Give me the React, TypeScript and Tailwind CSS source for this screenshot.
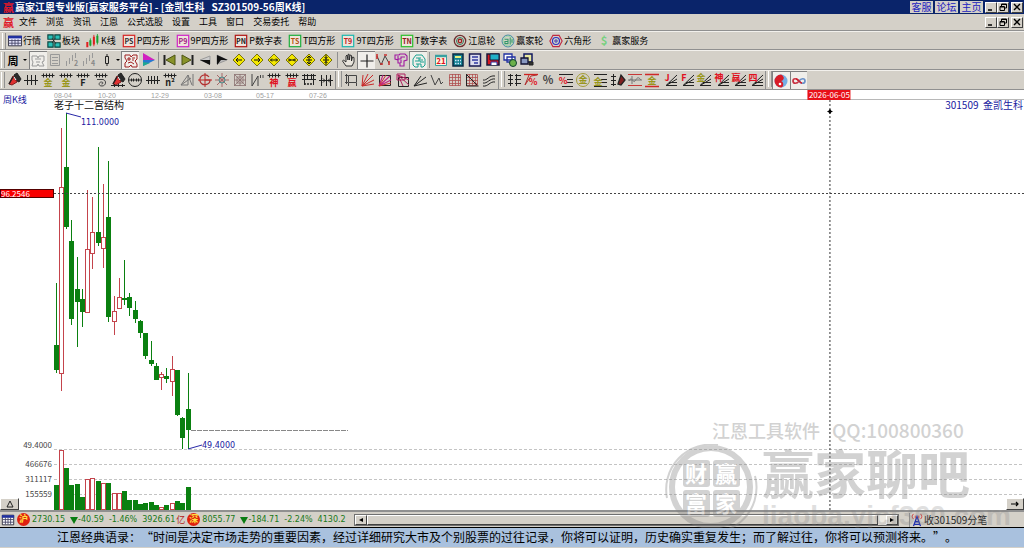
import type { ReactNode } from 'react';
import clsx from 'clsx';

// up candle?, high, low, body top, body bottom, volume top
type Candle = [boolean, number, number, number, number, number];

const candles: Candle[] = [
  [false, 193, 283, 255, 280, 395],
  [true, 38, 301, 97, 284, 360],
  [false, 23, 139, 77, 137, 378],
  [false, 130, 235, 151, 229, 395],
  [false, 167, 257, 199, 212, 394],
  [false, 199, 237, 209, 222, 407],
  [true, 100, 223, 159, 223, 389],
  [true, 107, 179, 142, 164, 388],
  [false, 57, 156, 142, 153, 391],
  [true, 94, 178, 147, 159, 393],
  [false, 71, 232, 127, 227, 393],
  [true, 206, 245, 221, 232, 403],
  [true, 188, 219, 207, 219, 403],
  [false, 170, 215, 208, 210, 401],
  [false, 203, 226, 207, 218, 410],
  [false, 211, 233, 220, 229, 410],
  [false, 230, 248, 231, 243, 414],
  [false, 243, 269, 243, 266, 413],
  [false, 251, 276, 270, 274, 412],
  [false, 273, 290, 276, 290, 415],
  [true, 282, 300, 284, 288, 417],
  [false, 278, 293, 286, 289, 415],
  [true, 266, 306, 279, 292, 413],
  [false, 280, 326, 280, 325, 411],
  [false, 327, 359, 328, 348, 413],
  [false, 283, 359, 319, 340, 397],
];

const dates = [
  { x: 54, text: '08-04' },
  { x: 98, text: '10-20' },
  { x: 151, text: '12-29' },
  { x: 204, text: '03-08' },
  { x: 256, text: '05-17' },
  { x: 309, text: '07-26' },
];

const menus = ['文件', '浏览', '资讯', '江恩', '公式选股', '设置', '工具', '窗口', '交易委托', '帮助'];

const Icon = ({ children, className = 'w-4 h-4' }: { children: ReactNode; className?: string }) => (
  <svg className={clsx('shrink-0', className)} viewBox="0 0 16 16" fill="none" stroke="#222" strokeWidth={1}>
    {children}
  </svg>
);

const small = 'w-[14px] h-[14px]';

const Glyph = ({ x = 8, y = 14, size = 9, color = '#e01020', children }: { x?: number; y?: number; size?: number; color?: string; children: string }) => (
  <text x={x} y={y} fontSize={size} fill={color} stroke="none" textAnchor="middle" fontWeight="bold">
    {children}
  </text>
);

const Ruler = () => <path d="M1.5 3.5h13M3.5 1.5v4M6.5 1.5v4M9.5 1.5v4M12.5 1.5v4" />;

const Boxed = ({ text, color, ink }: { text: string; color: string; ink: string }) => (
  <Icon className={small}>
    <rect x="1.5" y="1.5" width="13" height="13" stroke={color} strokeWidth="1.4" fill="#efe4dc" />
    <Glyph y={11} size={8} color={ink}>{text}</Glyph>
  </Icon>
);

const Diamond = ({ d }: { d: string }) => (
  <Icon>
    <path d="M8 2l6 6-6 6-6-6z" fill="#f4e800" stroke="#77720c" />
    <path d={d} stroke="#111" />
  </Icon>
);

const Fan = ({ text, color = '#e01020' }: { text: string; color?: string }) => (
  <Icon>
    <path d="M4 13.5L15 3M5 13L15 7M7 10.5h8M4 13.5h11" />
    <Glyph x={5} y={9} size={9} color={color}>{text}</Glyph>
  </Icon>
);

const Pen = () => (
  <>
    <path d="M8 3l3-2 4 6-2 3-4-2z" fill="#2a2a2a" />
    <path d="M7 4l4 6-5 3-3-1z" fill="#e03030" stroke="#802020" />
    <path d="M8 5l2 3" stroke="#fff" />
    <path d="M3 12l4-7" strokeWidth="1.5" />
  </>
);

const Grid = ({ color = '#b05050' }: { color?: string }) => (
  <path d="M2.5 2.5h11v11h-11zM5.5 2v12M8.5 2v12M11.5 2v12M2 5.5h12M2 8.5h12M2 11.5h12" stroke={color} strokeWidth=".8" />
);

const tools: { label: string; icon: ReactNode }[] = [
  { label: '行情', icon: <Icon className={small}><path d="M.5 2.5h15v11H.5z" fill="#e8e8ff" stroke="#223" /><path d="M0 3.5h16" stroke="#2030a0" strokeWidth="3" /><path d="M1 7.5h14M1 10.5h14M4.500 6v7M8 6v7M11.500 6v7" stroke="#446" /></Icon> },
  { label: '板块', icon: <Icon className={small}><path d="M1 1h6v5H1zM9 1h6v5H9zM1 9h6v6H1zM9 10h6v5H9z" fill="#28c0b8" stroke="#08443f" strokeWidth="1.300" /><path d="M6 5l4 6M9 5l-3 5" /></Icon> },
  { label: 'K线', icon: <Icon className={small}><path d="M1.500 9v6M9 3v9" stroke="#e02020" strokeWidth="2.300" /><path d="M5 7v6M13 2v8" stroke="#18a030" strokeWidth="2.300" /><path d="M5 5v9M13 0v12" stroke="#18a030" /><path d="M9 1v13" stroke="#e02020" /></Icon> },
  { label: 'P四方形', icon: <Boxed text="PS" color="#d82828" ink="#303030" /> },
  { label: '9P四方形', icon: <Boxed text="P9" color="#d028c8" ink="#a01880" /> },
  { label: 'P数字表', icon: <Boxed text="PN" color="#b01818" ink="#202020" /> },
  { label: 'T四方形', icon: <Boxed text="TS" color="#20b040" ink="#b05010" /> },
  { label: '9T四方形', icon: <Boxed text="T9" color="#20b8b0" ink="#c02020" /> },
  { label: 'T数字表', icon: <Boxed text="TN" color="#30c030" ink="#901818" /> },
  { label: '江恩轮', icon: <Icon className={small}><circle cx="8" cy="8" r="6.500" stroke="#703030" strokeWidth="1.500" /><circle cx="8" cy="8" r="4" stroke="#207050" /><circle cx="8" cy="8" r="2" stroke="#a02020" strokeWidth="1.500" /></Icon> },
  { label: '赢家轮', icon: <Icon className={small}><circle cx="8" cy="8" r="6.800" stroke="#3080a0" /><circle cx="8" cy="8" r="5.500" stroke="#98d8a0" /><path d="M4 6h4v5H4.500V8.500H8M10.500 4v8M12.500 6v4" stroke="#309868" strokeWidth="1.200" /></Icon> },
  { label: '六角形', icon: <Icon className={small}><path d="M4.500 1.500h7L15 8l-3.500 6.500h-7L1 8z" stroke="#c02840" strokeWidth="1.300" /><circle cx="8" cy="8" r="4" stroke="#3030c0" strokeWidth="1.300" /><circle cx="8" cy="8" r="1.500" fill="#c050a0" stroke="#3070c0" /></Icon> },
  { label: '赢家服务', icon: <Icon className={small}><Glyph y={13} size={13} color="#78d080">$</Glyph></Icon> },
];

const navTools = [
  <Icon><path d="M2.500 3v10" strokeWidth="2" /><path d="M13 3v10L4 8z" fill="#88922a" stroke="#4c5415" /></Icon>,
  <Icon><path d="M13.500 3v10" strokeWidth="2" /><path d="M3 3v10l9-5z" fill="#88922a" stroke="#4c5415" /></Icon>,
  <Icon><path d="M13 4v8L3 8z" fill="#ccc" stroke="#999" /><path d="M3 8h10v5z" fill="#111" stroke="none" /></Icon>,
  <Icon><path d="M3 3v9l10-4z" fill="#bbb" stroke="#999" /><path d="M3 3l11 5H7l-4 5z" fill="#111" stroke="none" /></Icon>,
  <Diamond d="M11 8H5M7 6L5 8l2 2" />,
  <Diamond d="M5 8h6M9 6l2 2-2 2" />,
  <Diamond d="M4.5 8h7M6 6.500L4.500 8 6 9.500M10 6.500L11.500 8 10 9.500" />,
  <Diamond d="M4 8h8M5 6.500L6.500 8 5 9.500M11 6.500L9.500 8l1.500 1.500" />,
  <Diamond d="M8 4v8M6 6l2-2 2 2M6 10l2 2 2-2M5 8h6" />,
  <Diamond d="M8 3v10M6.500 5L8 6.500 9.500 5M6.500 11L8 9.500 9.500 11M5 8h6" />,
];

const pointerTools = [
  <Icon><path d="M5 14L1.500 9l1-1L5 10V4l1-1 1 5V2.500l1-.5.5 6L9 3l1.500.5V9l1-4 1.500.5V10l-2 4z" fill="#e8e4dc" strokeWidth=".9" /></Icon>,
  <Icon><path d="M8 1.500v13M1.500 8h13" strokeWidth="1.200" /></Icon>,
  <Icon><path d="M1 4l4 9 4-9 4 7" stroke="#444" /><path d="M1 2v5M4 12h3M8 3h3M13 9v4" stroke="#c83030" strokeWidth="1.600" /></Icon>,
  <Icon><path d="M2 3h4l1-1h5l2 2v4l-3 1v5H7v-3H5V8L2 7zM5 4v3h3V5h4M8 8v3" stroke="#a018a0" strokeWidth="1.100" /></Icon>,
  <Icon><path d="M2 12V6l3-4h6l3 4v6l-2 2h-2v-3H7v3H4zM5 5h3v3H4M9 4v5h4M11 6v2M5 11h2" stroke="#18a090" /></Icon>,
];

const fileTools = [
  <Icon><path d="M2.500 3.500h11v10h-11z" fill="#fff3e0" stroke="#38a0a0" /><path d="M2 4h12" stroke="#38a0a0" strokeWidth="2.500" /><Glyph y={12} size={8}>21</Glyph></Icon>,
  <Icon><path d="M3 2h10v12H3z" fill="#138090" stroke="#082a44" strokeWidth="1.500" /><path d="M5 5h6" stroke="#e8f080" strokeWidth="2" /><path d="M5 8.500h6M5 11.500h6" stroke="#d0e8ff" strokeWidth="1.500" strokeDasharray="1.500 1" /></Icon>,
  <Icon><path d="M2.500 2h11v12h-11z" fill="#dde" stroke="#181850" strokeWidth="1.500" /><path d="M5 5h6M5 8h6M7 11h4" stroke="#3038a0" strokeWidth="1.300" /></Icon>,
  <Icon><path d="M2 2h12v11H2z" fill="#d81820" stroke="#181838" strokeWidth="1.500" /><path d="M5 2h9v6H5z" fill="#20b0c8" stroke="#181838" /><path d="M6 13v-3h6v3" fill="#fff" stroke="#2030a0" /></Icon>,
  <Icon><path d="M2 2h8v6H2zM5 5h8v5H5z" fill="#fff" stroke="#2030a0" strokeWidth="1.300" /><circle cx="11" cy="11" r="3.500" fill="#6ab04a" stroke="#104030" /></Icon>,
  <Icon><path d="M5 2h8v8H5z" fill="#e8e8a0" stroke="#101860" strokeWidth="1.500" /><path d="M2 6h7v6H2z" fill="#8898c0" stroke="#101030" strokeWidth="1.300" /><path d="M10 10h4v3h-4z" fill="#333" /></Icon>,
];

const drawTools = [
  <Icon><Pen /></Icon>,
  <Icon><path d="M1 8.5h14M4.500 3v10M8.5 3v10M12.500 3v10" /></Icon>,
  <Icon><Ruler /><Glyph color="#98961c">金</Glyph></Icon>,
  <Icon><Ruler /><Glyph color="#98961c">金</Glyph></Icon>,
  <Icon><Ruler /><Glyph color="#222">F</Glyph></Icon>,
  <Icon><Ruler /><path d="M4 7.500h6c4 1 3 6.500-1 6.500-4 0-3.500-4-.5-4 2 0 2 2 0 2" stroke="#444" /></Icon>,
  <Icon><Pen /><path d="M1 13.500h14M4.500 12v3M8.500 12v3M12.500 12v3" /></Icon>,
  <Icon><circle cx="8" cy="8" r="6.500" /><path d="M2 8h12M4.500 6.500v3M6.500 6.500v3M9.500 6.500v3M11.500 6.500v3" /></Icon>,
  <Icon><path d="M1 8.5h14M3.500 4v8M6.500 4v8M9.500 4v8M12.500 4v8" /></Icon>,
  <Icon><Ruler /><Glyph color="#222">n²</Glyph></Icon>,
  <Icon><path d="M2 13L9 3v10zM9 3l4 10M14 2v12M2 13l10-7" stroke="#777" /></Icon>,
  <Icon><path d="M1 8h14M8 1v14" stroke="#c02020" /><path d="M8 8h5c0 5-8 7-10 1C2 3 9 1 12 5" stroke="#b03030" strokeWidth="1.200" /></Icon>,
  <Icon><path d="M8 1v14M1 8h14M3 3l10 10M13 3L3 13" stroke="#a86868" /><circle cx="8" cy="8" r="3" stroke="#489090" /></Icon>,
  <Icon><path d="M2.500 2.500h11v11h-11zM2 2l12 12M14 2L2 14M8 2v12M2 8h12M5 5h6v6H5z" stroke="#8a7070" strokeWidth=".8" /></Icon>,
  <Icon><path d="M3 2v12L9 4v10M11.500 3v3M14 3v3" stroke="#444" /></Icon>,
  <Icon><Ruler /><Glyph>神</Glyph></Icon>,
  <Icon><Ruler /><Glyph>赢</Glyph></Icon>,
  <Icon><path d="M1 3.500h14M1 7.500h14M3.500 2v11M6.500 2v6M10.500 2v6M12.500 2v11" /><path d="M3 12h10" strokeWidth="1.500" strokeDasharray="2 1" /></Icon>,
  <Icon><path d="M1 8.5h14M3.500 3v11M12.500 3v11M8.500 3v11M5 6.500l2 2-2 2M12 6.500l-2 2 2 2" /></Icon>,
];

const shapeTools = [
  <Icon><path d="M5.500 3.500h8v7h-8zM2 3.500h3M2 10.500h3M3.500 2v10M5.500 11v3M13.500 11v3" stroke="#444" /></Icon>,
  <Icon><path d="M2 14L3 3M2 14L8 2M2 14L13 3M2 14l12-6M2 14l12-2" stroke="#c82828" /></Icon>,
  <Icon><path d="M2.500 3.500h11v10h-11z" /><path d="M2 14L6 3M2 14L13 4M2 14l12-6" stroke="#c02080" strokeWidth="1.100" /><path d="M2 14L9 3M2 14l12-3" stroke="#d03030" /></Icon>,
  <Icon><path d="M3.500 5.500h10v9h-10z" /><path d="M3 3l11 10M3 3l11 5M3 3l5 11M2 2h8v6H2z" stroke="#b02060" /></Icon>,
  <Icon><path d="M2 14L9 4M2 14l12-9M2 14l13-3" /></Icon>,
  <Icon><path d="M2 3l4 10 4-7 2 6 2-2" stroke="#444" /></Icon>,
  <Icon><Grid /></Icon>,
  <Icon><Grid /><path d="M2.500 2v12h12M3 3l10 10" /></Icon>,
  <Icon><path d="M2 8c4 1 6-5 12-4M2 11c4 1 7-5 12-4M2 14c5 1 7-5 12-4" /></Icon>,
];

const lineTools = [
  <Icon><path d="M4.500 2v12M2 3.500h5M2 7.500h5M2 11.500h5M9 3.500h6M9 7.500h6M9 11.500h6M10.500 2v12" /></Icon>,
  <Icon><path d="M1 2.500h14" stroke="#d02020" strokeWidth="1.300" /><path d="M2 13L8 4l6-1M2 13L6 3" stroke="#b03030" /><Glyph x={10} y={13}>%</Glyph></Icon>,
  <Icon><Glyph y={12} size={11} color="#444">%</Glyph></Icon>,
  <Icon><path d="M1 2.500h14M9 7.500h6M9 10.500h6M4 14.500h11" /><Glyph x={5} y={12}>%</Glyph></Icon>,
  <Icon><circle cx="8" cy="8" r="6.500" stroke="#a39c38" /><Glyph y={11} color="#98961c">金</Glyph></Icon>,
  <Icon><path d="M2 2.500h13M9 7.500h6M9 10.500h6M2 14.500h13" /><Glyph x={6} y={13} color="#98961c">金</Glyph></Icon>,
  <Icon><path d="M3.500 2v12M1 4.5h5M1 8.5h5M1 12.5h5" /><path d="M8 12l3-9 4 5-4 5z" fill="#802020" strokeWidth="1.300" /></Icon>,
  <Icon><path d="M1 2.500h14M1 13.500h14" stroke="#c83838" strokeWidth="1.200" /><path d="M2 9c3-6 4 3 6 0s3-5 6-1M5 4v8M1 8h14" stroke="#777" /></Icon>,
  <Icon><path d="M1 2.500h14M1 14.500h14" stroke="#d02828" strokeWidth="1.300" /><Glyph y={12} color="#98961c">金</Glyph></Icon>,
  <Fan text="J" />,
  <Fan text="F" />,
  <Fan text="金" color="#98961c" />,
  <Fan text="神" />,
  <Fan text="赢" />,
  <Fan text="四" />,
];

const modeTools = [
  <Icon><circle cx="8" cy="8" r="6.500" fill="#74aee4" stroke="none" /><path d="M8 1.500a6.500 6.500 0 0 0 0 13c3 0 3-6 0-6.500 3 0 4-5 0-6.500z" fill="#d81c28" stroke="none" /><circle cx="9" cy="5" r="1.500" fill="#d81c28" stroke="none" /><circle cx="7" cy="11" r="1.300" fill="#fff" stroke="none" /></Icon>,
  <Icon><path d="M8 8c-2-3-6-3-6 0s4 3 6 0" stroke="#c83040" strokeWidth="1.700" /><path d="M8 8c2 3 6 3 6 0s-4-3-6 0" stroke="#6890c8" strokeWidth="1.700" /><path d="M5 5.800C7 6 9 10 11 10.200" stroke="#d02030" strokeWidth="1.700" /></Icon>,
];

const ToolButton = ({ pressed, children }: { pressed?: boolean; children: ReactNode }) => (
  <button
    className={clsx(
      'flex-1 min-w-0 h-[18px] flex items-center justify-center',
      pressed && 'bg-[#f0eeea] border-t border-l border-[#808080]'
    )}
  >
    {children}
  </button>
);

const Group = ({ items, pressed = [], className }: { items: ReactNode[]; pressed?: number[]; className: string }) => (
  <div className={clsx('flex shrink-0', className)}>
    {items.map((item, i) => (
      <ToolButton key={i} pressed={pressed.includes(i)}>{item}</ToolButton>
    ))}
  </div>
);

const Grip = () => <span className="w-1 h-4 shrink-0 border-l border-r border-l-white border-r-[#909090]" />;
const Divider = () => <span className="w-px h-4 mx-[2px] shrink-0 bg-[#909090]" />;
const Splitter = () => (
  <span className="flex shrink-0 gap-[2px]">
    <span className="w-px h-[18px] bg-[#909090]" />
    <Grip />
  </span>
);

const Bar = ({ children, className }: { children: ReactNode; className: string }) => (
  <div className={clsx('flex items-center bg-[#d4d0c8] border-t border-t-[#f2f0ec] border-b border-b-[#909090]', className)}>
    {children}
  </div>
);

const raised = 'bg-[#d4d0c8] border border-t-white border-l-white border-r-[#404040] border-b-[#404040] text-black';

const WindowButtons = () => (
  <div className="flex items-center">
    <button aria-label="最小化" className={clsx(raised, 'w-3 h-[11px] flex items-center justify-center')}>
      <svg className="w-2 h-2" viewBox="0 0 8 8"><path d="M1 7h4" stroke="#000" strokeWidth="1.500" /></svg>
    </button>
    <button aria-label="还原" className={clsx(raised, 'w-3 h-[11px] flex items-center justify-center')}>
      <svg className="w-2 h-2" viewBox="0 0 8 8" fill="none" stroke="#000"><path d="M2.500 3V1h5v4H6M1 3.500h4.500v4H1zM2 1.500h5M1 4h4" /></svg>
    </button>
    <button aria-label="关闭" className={clsx(raised, 'w-3 h-[11px] ml-[2px] flex items-center justify-center')}>
      <svg className="w-2 h-2" viewBox="0 0 8 8"><path d="M1 1l6 6M7 1L1 7" stroke="#000" strokeWidth="1.400" /></svg>
    </button>
  </div>
);

const Logo = () => (
  <span className="w-3 text-[11px] leading-3 font-bold text-[#e01828]">赢</span>
);

const Chart = () => (
  <main className="relative bg-white">
    <svg className="block w-full h-[420px]">
      <line x1="54" x2="100%" y1="9.500" y2="9.500" stroke="#b8b8b8" />
      {dates.map((d) => (
        <text key={d.text} x={d.x} y="8" fontSize="7" fill="#a0a0a0" className="font-['Liberation_Sans']">{d.text}</text>
      ))}
      <text x="3" y="13" fontSize="9" fill="#1818a0">周K线</text>
      <text x="54" y="19" fontSize="10" fill="#111">老子十二宫结构</text>
      <text x="100%" dx="-1" y="19" fontSize="10" fill="#1818a0" textAnchor="end" xmlSpace="preserve">301509  金凯生科</text>

      {[360, 375, 390, 405].map((y) => (
        <line key={y} x1="54" x2="100%" y1={y - 0.5} y2={y - 0.5} stroke="#c4c4c4" strokeDasharray="3 2" />
      ))}
      <line x1="191" x2="348" y1="340.500" y2="340.500" stroke="#888" strokeDasharray="5 1" />

      {candles.map(([up, high, low, top, bottom, volume], i) => {
        const x = Math.round(53.5 + i * 5.28);
        const color = up ? '#c4444c' : '#0a8010';
        const fill = up ? '#fff' : color;
        return (
          <g key={i} stroke={color} fill={fill}>
            <line x1={x + 2.5} x2={x + 2.5} y1={high} y2={low} />
            <rect x={x + 0.5} y={top + 0.5} width="4" height={Math.max(bottom - top - 1, 1)} />
            <rect x={x + 0.5} y={volume + 0.5} width="4" height={419 - volume} />
          </g>
        );
      })}

      <g fill="none" stroke="#2828a8">
        <path d="M66 23l15 4M188 359l14-4" />
      </g>
      <g fontSize="8" fill="#1818a0" className="font-['DejaVu_Sans']">
        <text x="81" y="35">111.0000</text>
        <text x="202" y="358">49.4000</text>
      </g>
      <g fontSize="8" fill="#444" textAnchor="end">
        <text x="52" y="358">49.4000</text>
        <text x="52" y="377">466676</text>
        <text x="52" y="392">311117</text>
        <text x="52" y="407">155559</text>
      </g>

      {/* Crosshair */}
      <line x1="54" x2="100%" y1="103.500" y2="103.500" stroke="#444" strokeDasharray="2 2" />
      <rect x="0.500" y="99.500" width="53" height="8" fill="#f80000" stroke="#500" />
      <text x="1" y="107" fontSize="8" fill="#fff">96.2546</text>
      <svg x="81%" overflow="visible">
        <line x1="0.500" x2="0.500" y1="10" y2="420" stroke="#333" strokeDasharray="2 2" />
        <path d="M-2 21.500h5M.5 19v5M-.5 20.5h2v2h-2z" fill="#000" stroke="#000" />
        <rect x="-22" width="43" height="10" fill="#e81018" />
        <text x="0" y="8" fontSize="8" fill="#fff" textAnchor="middle">2026-06-05</text>
      </svg>
    </svg>
    <button aria-label="展开" className={clsx(raised, 'absolute left-0 bottom-0 w-[19px] h-3 flex items-center justify-center')}>
      <svg className="w-2 h-2" viewBox="0 0 8 8"><path d="M4 1l3 6H1z" fill="none" stroke="#222" /></svg>
    </button>
    <button aria-label="向右" className={clsx(raised, 'absolute right-0 bottom-0 w-[18px] h-3 flex items-center justify-center')}>
      <svg className="w-2 h-2" viewBox="0 0 8 8"><path d="M0 4h7M5 2l2 2-2 2" fill="none" stroke="#000" strokeWidth="1.200" /></svg>
    </button>
  </main>
);

const Badge = ({ children }: { children: string }) => (
  <span className="w-[13px] h-[13px] mx-[2px] shrink-0 rounded-full bg-[#e02010] text-[#ffe040] text-[9px] leading-3 text-center font-bold">{children}</span>
);

const Quote = ({ index, change, percent, volume }: { index: string; change: string; percent: string; volume: string }) => (
  <span className="flex items-center gap-[5px] whitespace-nowrap text-[8px] leading-3 text-[#187818] font-['DejaVu_Sans','Noto_Sans_CJK_SC',sans-serif]">
    <span>{index}</span>
    <span className="flex items-center">
      <svg className="w-2 h-2" viewBox="0 0 8 8"><path d="M0 1h8L4 8z" fill="#0a7d12" /></svg>
      {change}
    </span>
    <span>{percent}</span>
    <span>{volume}</span>
  </span>
);

const StatusBar = () => (
  <footer className="flex items-center h-[18px] bg-[#d4d0c8] border-t-2 border-t-[#909090] border-b border-b-black overflow-hidden">
    <div className="flex items-center w-[354px] pl-px shrink-0 overflow-hidden">
      <Icon className={small}><path d="M1.500 2.500h13v11h-13z" fill="#fff" stroke="#223" /><path d="M1 4h14" stroke="#2030a0" strokeWidth="3" /><path d="M2 7.500h12M2 10.500h12M5 5v8M8 5v8M11 5v8" stroke="#446" /></Icon>
      <Badge>沪</Badge>
      <Quote index="2730.15" change="-40.59" percent="-1.46%" volume="3926.61" />
      <span className="ml-px text-[9px] leading-3 text-[#b02020]">亿</span>
      <Badge>深</Badge>
      <Quote index="8055.77" change="-184.71" percent="-2.24%" volume="4130.2" />
    </div>
    <div className="flex flex-1 h-3 border border-[#707070] bg-[#ece9e2]">
      <button aria-label="向左滚动" className={clsx(raised, 'w-3 flex items-center justify-center')}>
        <svg className="w-1 h-1" viewBox="0 0 4 4"><path d="M4 0v4L0 2z" /></svg>
      </button>
      <div className={clsx(raised, 'flex-1 mr-2')} />
      <button aria-label="向右滚动" className={clsx(raised, 'w-3 flex items-center justify-center')}>
        <svg className="w-1 h-1" viewBox="0 0 4 4"><path d="M0 0v4l4-2z" /></svg>
      </button>
    </div>
    <div className="flex items-center w-[115px] ml-[10px] shrink-0 border-l border-[#909090]">
      <Icon className={small}><path d="M4 15L8 4l4 11M6 10h4M5 13h6" stroke="#2030b0" strokeWidth="1.500" /><path d="M4 1c-2 2-2 4 0 6M12 1c2 2 2 4 0 6M6 3v3M10 3v3" stroke="#d03030" /></Icon>
      <span className="text-[10px] leading-3 text-[#222] whitespace-nowrap">收301509分笔</span>
    </div>
  </footer>
);

const Watermark = () => (
  <div className="absolute right-0 bottom-0 w-[360px] h-[132px] pointer-events-none overflow-hidden text-[#808080] opacity-35">
    <p className="flex gap-3 pl-12 text-[18px] leading-7 font-medium whitespace-nowrap">
      <span>江恩工具软件</span>
      <span className="text-[19px]">QQ:100800360</span>
    </p>
    <div className="flex items-start">
      <svg className="w-[98px] h-[94px] shrink-0" viewBox="0 0 98 94">
        <circle cx="47" cy="43" r="39" fill="none" stroke="currentColor" strokeWidth="6" />
        <path d="M3 54A45 45 0 0 1 54 1M91 32A45 45 0 0 1 30 85" fill="none" stroke="currentColor" strokeWidth="2" />
        <g fill="currentColor">
          <rect x="19" y="16" width="27" height="27" rx="3" />
          <rect x="49" y="16" width="27" height="27" rx="3" />
          <rect x="19" y="46" width="27" height="27" rx="3" />
          <rect x="49" y="46" width="27" height="27" rx="3" />
        </g>
        <g fill="#fff" fontSize="22" fontWeight="bold" textAnchor="middle">
          <text x="32" y="38">财</text>
          <text x="62" y="38">赢</text>
          <text x="32" y="68">富</text>
          <text x="62" y="68">家</text>
        </g>
      </svg>
      <div className="whitespace-nowrap font-bold">
        <p className="text-[52px] leading-[56px]">赢家聊吧</p>
        <p className="text-[28px] leading-8 font-['Liberation_Sans',sans-serif] opacity-70">liaoba.yjcf360.com</p>
      </div>
    </div>
  </div>
);

export default function App() {
  return (
    <div className="relative flex flex-col bg-[#d4d0c8] font-['Noto_Sans_CJK_SC',sans-serif]">
      {/* Title bar */}
      <header className="flex items-center justify-between h-[14px] pl-[3px] pr-px bg-[#0a246a] text-white">
        <div className="flex items-center">
          <Logo />
          <h1 className="text-[10px] leading-3 font-bold whitespace-pre">赢家江恩专业版[赢家服务平台] - [金凯生科   SZ301509-56周K线]</h1>
        </div>
        <div className="flex items-center gap-[2px]">
          {['客服', '论坛', '主页'].map((name) => (
            <a key={name} href="#" className="w-[23px] bg-[#d4d0c8] text-center text-[10px] leading-3 text-[#2020c0]">{name}</a>
          ))}
          <WindowButtons />
        </div>
      </header>

      {/* Menu */}
      <nav className="flex items-center justify-between h-[17px] pl-[3px] pr-px border-b border-[#909090]">
        <div className="flex items-center">
          <Logo />
          <div className="flex gap-[9px] pl-1">
            {menus.map((name) => (
              <button key={name} className="text-[9px] leading-3 text-black">{name}</button>
            ))}
          </div>
        </div>
        <WindowButtons />
      </nav>

      <Bar className="h-[19px] pl-[2px]">
        <Grip />
        <div className="flex gap-[6px] pl-[2px]">
          {tools.map((tool) => (
            <button key={tool.label} className="flex items-center gap-px text-[9px] leading-3 whitespace-nowrap">
              {tool.icon}
              {tool.label}
            </button>
          ))}
        </div>
      </Bar>

      <Bar className="h-5 pl-px">
        <Grip />
        <button className="flex w-6 items-center justify-center gap-1 text-[11px] leading-4 font-bold">
          周
          <svg className="w-1 h-1" viewBox="0 0 4 4"><path d="M0 1h4L2 3z" /></svg>
        </button>
        <Group
          className="w-[68px]"
          pressed={[0]}
          items={[
            <Icon><path d="M2 3h5l1 2 1-2h5v5l-2 1 2 4H9l-1-2-1 2H2l1-4-1-2zM5 6h6M6 9h4" stroke="#999" /></Icon>,
            <Icon><path d="M3.500 2.500h9v11h-9zM5 5.500h6M5 8.500h6M5 11.500h6" stroke="#999" /></Icon>,
            <Icon><path d="M2.5 14V9M5.5 12V6M8.5 9V3M11.5 6V1" stroke="#999" /><Glyph x={12} y={14} size={7} color="#888">2</Glyph></Icon>,
            <Icon><path d="M2.5 14V9M5.5 12V6M8.5 9V3M11.5 6V1" stroke="#999" /><Glyph x={12} y={14} size={7} color="#888">4</Glyph></Icon>,
          ]}
        />
        <button aria-label="K线样式" className="flex w-6 items-center justify-center gap-px">
          <Icon><path d="M8 2v12" /><path d="M6.500 4.500h3v7h-3z" fill="#d4d0c8" /></Icon>
          <svg className="w-1 h-1" viewBox="0 0 4 4"><path d="M0 1h4L2 3z" /></svg>
        </button>
        <Group
          className="w-[35px]"
          pressed={[0]}
          items={[
            <Icon><path d="M2 2h5l1 2 2-2h4v4l-2 2 2 3v3H9l-1-2-2 2H2v-4l2-2-2-3zM5 5h2v2H5zM9 5h3M9 7h2M5 10l3-1 3 2" stroke="#a02020" /></Icon>,
            <Icon><path d="M3 5v9l12-6z" fill="#2878d0" stroke="none" /><path d="M3 1v7h12z" fill="#d020c0" stroke="none" /><path d="M3 10v4l7-3z" fill="#20a890" stroke="none" /></Icon>,
          ]}
        />
        <Divider />
        <Group className="w-[174px]" items={navTools} />
        <Divider />
        <Group className="w-[87px]" pressed={[1, 4]} items={pointerTools} />
        <Divider />
        <Group className="w-[104px]" items={fileTools} />
      </Bar>

      <Bar className="h-5 pl-px">
        <Grip />
        <Group className="w-[330px]" items={drawTools} />
        <Splitter />
        <Group className="w-[156px]" items={shapeTools} />
        <Splitter />
        <Group className="w-[260px]" items={lineTools} />
        <Splitter />
        <Group className="w-[35px]" pressed={[0, 1]} items={modeTools} />
      </Bar>

      <Chart />
      <StatusBar />

      <div className="relative z-10 h-5 bg-[#a9c1de] border-b border-[#d4d0c8] pl-[57px] text-[12px] leading-[18px] text-black whitespace-nowrap overflow-hidden [text-spacing-trim:space-all]">
        江恩经典语录：“时间是决定市场走势的重要因素，经过详细研究大市及个别股票的过往记录，你将可以证明，历史确实重复发生；而了解过往，你将可以预测将来。”。
      </div>

      <Watermark />
    </div>
  );
}
